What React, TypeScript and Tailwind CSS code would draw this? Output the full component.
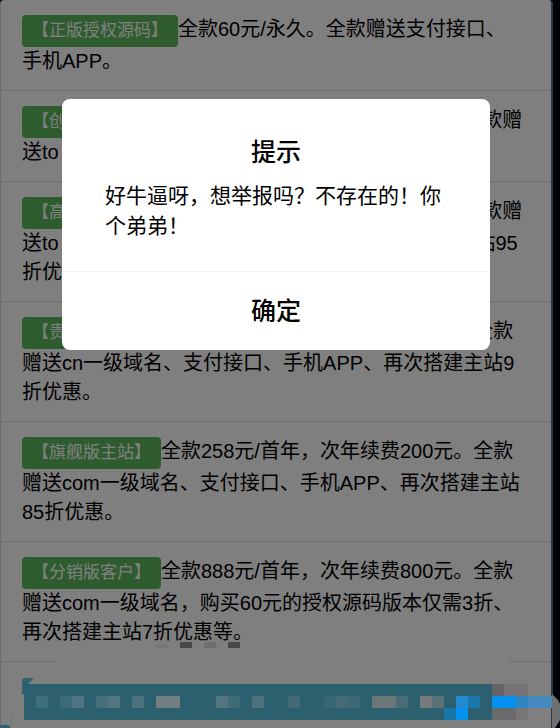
interface Plan {
  name: string;
  text: string;
}

const plans: Plan[] = [
  { name: "【正版授权源码】", text: "全款60元/永久。全款赠送支付接口、手机APP。" },
  { name: "【创业版分站】", text: "全款128元/首年，次年续费80元。全款赠送to p一级域名。" },
  {
    name: "【高级版分站】",
    text: "全款158元/首年，次年续费90元。全款赠送to p一级域名、支付接口、手机APP、再次搭建主站95折优惠。",
  },
  {
    name: "【贵宾版主站】",
    text: "全款188元/首年，次年续费150元。全款赠送cn一级域名、支付接口、手机APP、再次搭建主站9折优惠。",
  },
  {
    name: "【旗舰版主站】",
    text: "全款258元/首年，次年续费200元。全款赠送com一级域名、支付接口、手机APP、再次搭建主站85折优惠。",
  },
  {
    name: "【分销版客户】",
    text: "全款888元/首年，次年续费800元。全款赠送com一级域名，购买60元的授权源码版本仅需3折、再次搭建主站7折优惠等。",
  },
];

// Censor blocks: x, y, width, height, colour
const blocks: [number, number, number, number, string][] = [
  [156, 4, 12, 4, "#777777"],
  [180, 2, 12, 6, "#484848"],
  [204, 2, 12, 6, "#6e6e6e"],
  [228, 2, 12, 6, "#484848"],
  [36, 56, 12, 12, "#3e6f7c"],
  [60, 56, 12, 12, "#3c6b77"],
  [72, 56, 12, 12, "#507580"],
  [96, 56, 12, 12, "#466f7b"],
  [108, 56, 12, 12, "#54757e"],
  [132, 56, 12, 12, "#4c727d"],
  [156, 56, 24, 12, "#727f83"],
  [216, 56, 12, 12, "#54757e"],
  [228, 56, 12, 12, "#3f6b77"],
  [252, 56, 12, 12, "#4c727c"],
  [288, 56, 12, 12, "#436a75"],
  [324, 56, 12, 12, "#376773"],
  [336, 56, 12, 12, "#466b75"],
  [348, 56, 12, 12, "#3c6975"],
  [372, 56, 24, 12, "#69777b"],
  [396, 56, 12, 12, "#4c6c75"],
  [420, 56, 12, 12, "#777b7c"],
  [432, 56, 12, 12, "#5a7177"],
  [456, 56, 12, 12, "#2589cf"],
  [468, 56, 12, 12, "#1b76ac"],
  [444, 68, 12, 12, "#1876a9"],
  [456, 68, 12, 12, "#0491ef"],
  [492, 44, 12, 12, "#646464"],
  [504, 44, 24, 12, "#767474"],
  [492, 56, 24, 12, "#0491ef"],
  [516, 56, 12, 12, "#2f85c2"],
  [528, 56, 24, 12, "#4689bd"],
  [492, 68, 24, 12, "#6a6a6c"],
  [516, 68, 12, 12, "#787676"],
];

function PlanRow({ name, text }: Plan) {
  return (
    <li className="border-b border-[#ddd] pt-[15px] pb-[14px] pl-[21px] pr-[27px] text-[20px] leading-[29px]">
      <button
        type="button"
        className="h-8 rounded bg-[#5cb85c] px-[10px] align-middle text-[17px] leading-8 text-white"
      >
        {name}
      </button>
      {text}
    </li>
  );
}

function Mosaic() {
  return (
    <svg
      className="pointer-events-none absolute bottom-0 left-0 z-20"
      width="560"
      height="88"
      viewBox="0 0 560 88"
      aria-hidden="true"
    >
      {/* gap in the last divider */}
      <rect x="56" y="20" width="453" height="5" fill="#808080" />
      {/* corner left over from the hidden button */}
      <path d="M22 54V41q0-3 3-3h9l-6 6h-4v10z" fill="#2e6270" />
      {blocks.map(([x, y, w, h, fill], i) => (
        <rect key={i} x={x} y={y} width={w} height={h} fill={fill} />
      ))}
      <path d="M0 88v-3h7q3 0 3 3z" fill="#2e6270" />
      <path d="M11.5 76v12" stroke="#747474" />
      <path d="M552 54l6 6 2 4v16l-5 8h-3z" fill="#707070" />
    </svg>
  );
}

export default function App() {
  return (
    <div
      lang="zh-CN"
      className="relative min-h-screen overflow-hidden bg-[#020a12] pr-[7px] font-['Liberation_Sans','Noto_Sans_CJK_SC',sans-serif] text-black"
    >
      <main className="min-h-screen rounded-t border-l border-l-[#ddd] border-r-2 border-r-[#54758a] bg-white">
        <ul>
          {plans.map((plan) => (
            <PlanRow key={plan.name} {...plan} />
          ))}
        </ul>
        <div className="pt-[22px] pb-2 pl-[23px] pr-[59px]">
          <button type="button" aria-label="购买" className="block h-9 w-full bg-[#5bc0de]" />
        </div>
      </main>

      {/* Alert */}
      <div className="absolute inset-0 z-10 flex items-start bg-black/50 pt-[99px] pl-[62px] pr-[70px]">
        <div
          role="alertdialog"
          aria-labelledby="alert-title"
          aria-describedby="alert-text"
          className="w-full overflow-hidden rounded-lg bg-white"
        >
          <h2 id="alert-title" className="pt-9 text-center text-[25px] font-medium leading-[34px]">
            提示
          </h2>
          <p id="alert-text" className="px-[43px] pt-3 pb-[30px] text-[21px] leading-[30px]">
            好牛逼呀，想举报吗？不存在的！你个弟弟！
          </p>
          <button
            type="button"
            className="block w-full border-t border-[#f2f2f2] py-[22px] text-center text-[25px] font-medium leading-[34px]"
          >
            确定
          </button>
        </div>
      </div>

      <Mosaic />
    </div>
  );
}
